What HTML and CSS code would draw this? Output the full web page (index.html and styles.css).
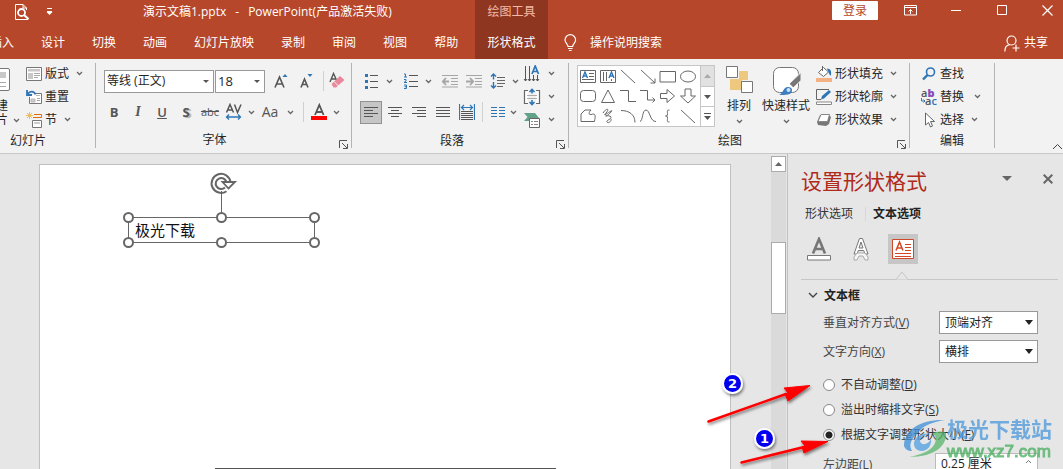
FILE: index.html
```html
<!DOCTYPE html>
<html lang="zh-CN">
<head>
<meta charset="utf-8">
<title>演示文稿1.pptx - PowerPoint</title>
<link rel="stylesheet" href="styles.css">
</head>
<body>
<svg class="defs" width="0" height="0" aria-hidden="true">
  <symbol id="chev" viewBox="0 0 7 5"><path d="M1 1l2.500 2.500L6 1" fill="none" stroke="#666" stroke-width="1.300"/></symbol>
  <symbol id="launch" viewBox="0 0 9 9"><path d="M.5 8V.5H8M3 3l5 5M8.500 4v4.500H4" fill="none" stroke="#555"/></symbol>
</svg>

<header class="header">
  <div class="header-main">
    <div class="title-row">
      <button class="hbtn" aria-label="打印预览"><svg width="16" height="18" viewBox="0 0 16 18" fill="none" stroke="#fff"><path d="M14 15.500v1H1.500v-15H9l3.500 3.500v2M9 1.500V5h3.500" /><circle cx="7.500" cy="9.500" r="3.500" stroke-width="1.800"/><path d="M10 12l4.500 4" stroke-width="2.200"/></svg></button>
      <button class="hbtn qat" aria-label="自定义快速访问工具栏"><svg width="7" height="8" viewBox="0 0 7 8"><path d="M1 .5h5M1 3.500h5" stroke="#fff"/><path d="M.5 4h6l-3 3z" fill="#fff"/></svg></button>
      <h1 class="doc-title"><span>演示文稿1.pptx</span><span>-</span><span>PowerPoint(产品激活失败)</span></h1>
    </div>
    <nav class="tabs">
      <button class="tab">插入</button><button class="tab">设计</button><button class="tab">切换</button><button class="tab">动画</button><button class="tab">幻灯片放映</button><button class="tab">录制</button><button class="tab">审阅</button><button class="tab">视图</button><button class="tab">帮助</button>
    </nav>
  </div>
  <div class="context">
    <div class="context-name">绘图工具</div>
    <button class="tab">形状格式</button>
  </div>
  <div class="header-side">
    <div class="window-row">
      <button class="login">登录</button>
      <button class="hbtn" aria-label="功能区显示选项"><svg width="13" height="11" viewBox="0 0 13 11" fill="none" stroke="#fff"><path d="M.5.5h12v9.500H.5zM.5 2.500h12M6.500 9V4.500M4.500 6.500l2-2 2 2"/></svg></button>
      <button class="hbtn" aria-label="最小化"><svg width="11" height="11" viewBox="0 0 11 11"><path d="M0 5.500h10" stroke="#fff"/></svg></button>
      <button class="hbtn" aria-label="最大化"><svg width="11" height="11" viewBox="0 0 11 11"><path d="M.5.5h9v9h-9z" fill="none" stroke="#fff"/></svg></button>
      <button class="hbtn" aria-label="关闭"><svg width="11" height="11" viewBox="0 0 11 11"><path d="M.5.5l10 10M10.500.5l-10 10" stroke="#fff" stroke-width="1.200"/></svg></button>
    </div>
    <div class="search-row">
      <button class="tab tell"><svg width="13" height="18" viewBox="0 0 13 18" fill="none" stroke="#fff" stroke-width="1.200"><path d="M4 12.500c0-2.500-3-3.500-3-6.500a5.300 5.300 0 0 1 10.600 0c0 3-3 4-3 6.500zM4 14.500h4.600M5 16.500h2.600"/></svg>操作说明搜索</button>
      <button class="tab share"><svg width="16" height="17" viewBox="0 0 16 17" fill="none" stroke="#fff" stroke-width="1.200"><circle cx="7.500" cy="5.500" r="4.500"/><path d="M.8 16.500c0-4 2-6.500 5-6.800M12 9.500v7M8.500 13H15.500"/></svg>共享</button>
    </div>
  </div>
</header>

<section class="ribbon" aria-label="功能区">
  <div class="group g-slides">
    <div class="group-body">
      <button class="big new-slide"><svg width="15" height="24" viewBox="0 0 15 24"><rect x="-6" y=".5" width="19.500" height="22" rx="1.500" fill="#fff" stroke="#777"/><path d="M0 4h10v6H0z" fill="#c8c8c8"/><path d="M0 14.500h10M0 18.500h10" stroke="#aaa"/></svg><span>建</span><span>片<svg class="chev"><use href="#chev"/></svg></span></button>
      <div class="stack">
        <button class="cmd"><svg width="16" height="16" viewBox="0 0 16 16" fill="none"><path d="M.5 1.500h15v13H.5z" fill="#fff" stroke="#777"/><path d="M2 3h12v2.500H2zM2 7h5v6H2z" fill="#c8c8c8"/><path d="M8 7.500h6M8 9.500h6M8 11.500h4" stroke="#aaa"/></svg>版式<svg class="chev"><use href="#chev"/></svg></button>
        <button class="cmd"><svg width="16" height="16" viewBox="0 0 16 16" fill="none"><path d="M3.500 8v6.500h12v-10H9" fill="#fff" stroke="#777"/><path d="M10 6.500h4M5 10h4v3H5z" fill="#ccc" stroke="#bbb"/><path d="M11 9.500h3M11 11.500h3" stroke="#aaa"/><path d="M1 1v5h5M1.500 5.500C4 1.500 8 2 9.500 5.500" stroke="#2e75b6" stroke-width="1.800"/></svg>重置</button>
        <button class="cmd"><svg width="16" height="16" viewBox="0 0 16 16" fill="none"><path d="M3.500 0v7M0 3.500h7M1 1l5 5M6 1L1 6" stroke="#eebc5c"/><path d="M8 2.500h7.500v3H7" stroke="#e36c0a"/><path d="M6.500 8.500h9v7h-9z" fill="#fff" stroke="#777"/><path d="M8 10h6v2H8z" fill="#ccc"/></svg>节<svg class="chev"><use href="#chev"/></svg></button>
      </div>
    </div>
    <div class="group-name">幻灯片</div>
  </div>

  <div class="group g-font">
    <div class="group-body lines">
      <div class="line">
        <label class="combo face"><input aria-label="字体" value="等线 (正文)"></label>
        <label class="combo size"><input aria-label="字号" value="18"></label>
        <button class="ib wide" aria-label="增大字号"><svg width="16" height="18" viewBox="0 0 16 18"><path d="M2 15.500L6.500 5l4.500 10.500M3.500 12h6" fill="none" stroke="#555" stroke-width="1.600"/><path d="M9.500 5L12 2l2.500 3z" fill="#2e75b6"/></svg></button>
        <button class="ib" aria-label="减小字号"><svg width="16" height="18" viewBox="0 0 16 18"><path d="M3 15.500L6.500 7l3.500 8.500M4.500 12.500h4" fill="none" stroke="#555" stroke-width="1.600"/><path d="M9.500 2h5L12 5z" fill="#2e75b6"/></svg></button>
        <i class="sep"></i>
        <button class="ib eraser" aria-label="清除格式"><svg width="16" height="18" viewBox="0 0 16 18"><path d="M1 10l3.500-8.500L7.500 8M2.500 7h4" fill="none" stroke="#555" stroke-width="1.400"/><path d="M2.500 12L11 4l4.500 4L7 15.500H4.500z" fill="#e8889a"/><path d="M5 9.500l4.500 4.500" stroke="#f2f2f2"/></svg></button>
      </div>
      <div class="line fonts">
        <button class="ib"><b>B</b></button>
        <button class="ib"><em>I</em></button>
        <button class="ib"><u>U</u></button>
        <button class="ib shadow">S</button>
        <button class="ib strike">abc</button>
        <button class="ib" aria-label="字符间距"><svg width="18" height="18" viewBox="0 0 18 18" fill="none"><path d="M1.500 9.500L5 1.500l3.500 8M3 7h4M9.500 1.500l3 8 3.500-8" stroke="#555" stroke-width="1.500"/><path d="M1.500 14h14M4 11.500L1.500 14 4 16.500M13 11.500l2.500 2.500-2.500 2.500" stroke="#2e75b6" stroke-width="1.300"/></svg></button><svg class="chev"><use href="#chev"/></svg>
        <button class="ib case">Aa</button><svg class="chev"><use href="#chev"/></svg>
        <i class="sep"></i>
        <button class="ib" aria-label="字体颜色"><svg width="16" height="18" viewBox="0 0 16 18"><path d="M4 12l4.300-10L12.600 12M5.500 9h5.500" fill="none" stroke="#555" stroke-width="1.800"/><path d="M0 13h16v4H0z" fill="#f00"/></svg></button><svg class="chev"><use href="#chev"/></svg>
      </div>
    </div>
    <div class="group-name">字体</div><button class="launch" aria-label="字体设置"><svg width="9" height="9"><use href="#launch"/></svg></button>
  </div>

  <div class="group g-para">
    <div class="group-body">
      <div class="lines">
        <div class="line">
          <button class="ib" aria-label="项目符号"><svg width="16" height="16" viewBox="0 0 16 16"><path d="M6 2.500h8M6 8.500h8M6 14.500h8" stroke="#555"/><path d="M1 1h3v3H1zM1 7h3v3H1zM1 13h3v3H1z" fill="#2e75b6"/></svg></button><svg class="chev gap"><use href="#chev"/></svg>
          <button class="ib" aria-label="编号"><svg width="16" height="16" viewBox="0 0 16 16" fill="none"><path d="M6 2.500h9M6 8.500h9M6 13.500h9" stroke="#555"/><path d="M1 1h1.500v3M1 4h3M1 6.500h2v1.500L1 9.500h3M1 12h2.500v3.500H1M1.500 13.700h2" stroke="#2e75b6"/></svg></button><svg class="chev gap"><use href="#chev"/></svg>
          <button class="ib" aria-label="减少缩进"><svg width="16" height="14" viewBox="0 0 16 14" fill="none" stroke="#a6a6a6"><path d="M0 1.500h16M9 4.500h7M9 7.500h7M9 10.500h7M0 13h16"/><path d="M7 7.500H1M4 4L.8 7.500 4 11" stroke-width="1.800"/></svg></button>
          <button class="ib" aria-label="增加缩进"><svg width="16" height="14" viewBox="0 0 16 14" fill="none" stroke="#a6a6a6"><path d="M0 1.500h16M9 4.500h7M9 7.500h7M9 10.500h7M0 13h16"/><path d="M0 7.500h6M4 4l3.200 3.500L4 11" stroke-width="1.800"/></svg></button>
          <button class="ib" aria-label="行距"><svg width="16" height="16" viewBox="0 0 16 16" fill="none"><path d="M7 4.500h8M7 7.500h8M7 10.500h8M7 13.500h6" stroke="#666"/><path d="M3.500 1v5.500M1 3.500L3.500 1 6 3.500M3.500 9v6M1 12.500L3.500 15 6 12.500" stroke="#2e75b6" stroke-width="1.400"/></svg></button><svg class="chev after"><use href="#chev"/></svg>
        </div>
        <div class="line">
          <button class="ib on" aria-label="左对齐"><svg width="14" height="12" viewBox="0 0 14 12"><path d="M0 1.500h14M0 4.500h9M0 7.500h14M0 10.500h9" stroke="#555"/></svg></button>
          <button class="ib" aria-label="居中"><svg width="14" height="12" viewBox="0 0 14 12"><path d="M0 1.500h14M3 4.500h8M0 7.500h14M3 10.500h8" stroke="#555"/></svg></button>
          <button class="ib" aria-label="右对齐"><svg width="14" height="12" viewBox="0 0 14 12"><path d="M0 1.500h14M5 4.500h9M0 7.500h14M5 10.500h9" stroke="#555"/></svg></button>
          <button class="ib" aria-label="两端对齐"><svg width="14" height="12" viewBox="0 0 14 12"><path d="M0 1.500h14M0 4.500h14M0 7.500h14M0 10.500h14" stroke="#555"/></svg></button>
          <button class="ib" aria-label="分散对齐"><svg width="16" height="16" viewBox="0 0 16 16" fill="none"><path d="M2 7.500h12M2 9.500h12M2 11.500h12M2 13.500h12M2 15.500h12" stroke="#555"/><path d="M.5 0v16M15.500 0v16M2.500 3.500h11M5 1L2.500 3.500 5 6M11 1l2.500 2.500L11 6" stroke="#2e75b6" stroke-width="1.200"/></svg></button>
          <i class="sep"></i>
          <button class="ib" aria-label="分栏"><svg width="14" height="12" viewBox="0 0 14 12"><path d="M0 1.500h6M0 4.500h6M0 7.500h6M0 10.500h6M8 1.500h6M8 4.500h6M8 7.500h6M8 10.500h6" stroke="#2e75b6" stroke-width="1.200"/></svg></button><svg class="chev"><use href="#chev"/></svg>
        </div>
      </div>
      <div class="stack">
        <button class="cmd" aria-label="文字方向"><svg width="18" height="18" viewBox="0 0 18 18" fill="none"><path d="M2.500 1v15M6.500 1v15M10.500 10v6M14.500 10v6" stroke="#555"/><path d="M1 14l1.500 2L4 14M5 14l1.500 2L8 14M9 14l1.500 2 1.500-2M13 14l1.500 2 1.500-2" stroke="#555"/><path d="M9 9l3.200-8L15.500 9M10 6.500h4.500" stroke="#2e75b6" stroke-width="1.700"/></svg><svg class="chev"><use href="#chev"/></svg></button>
        <button class="cmd" aria-label="对齐文本"><svg width="18" height="18" viewBox="0 0 18 18" fill="none"><path d="M5 2.500H1.500v13H5M13 2.500h3.500v13H13" fill="#fff" stroke="#666" stroke-width="1.200"/><path d="M4 7.500h10M4 10.500h10" stroke="#aaa"/><path d="M9 1.500v4M6.500 4L9 1.500 11.500 4M9 12v4.500M6.500 14L9 16.500l2.500-2.500" stroke="#2e75b6" stroke-width="1.600"/></svg><svg class="chev"><use href="#chev"/></svg></button>
        <button class="cmd" aria-label="转换为 SmartArt"><svg width="18" height="18" viewBox="0 0 18 18"><path d="M1 2h11l4 5-3 3H1l3.500-4z" fill="#62a288"/><path d="M6.500 7.500h10v9h-10z" fill="#fff" stroke="#666"/><path d="M8 10.500h2M11 10.500h4M8 13.500h2M11 13.500h4" stroke="#888"/></svg><svg class="chev"><use href="#chev"/></svg></button>
      </div>
    </div>
    <div class="group-name">段落</div><button class="launch" aria-label="段落设置"><svg width="9" height="9"><use href="#launch"/></svg></button>
  </div>

  <div class="group g-draw">
    <div class="group-body">
      <div class="gallery">
        <div class="shapes">
          <svg viewBox="0 0 20 20"><path d="M2.500 4.500h15v12h-15zM11 7.500h5M11 10.500h5M4 13.500h12"/><path class="blue" d="M4.500 12L7 6l2.500 6M5.500 10h3"/></svg>
          <svg viewBox="0 0 20 20"><path d="M2.500 4.500h15v12h-15zM5.500 6v9M8.500 6v9M13.500 13v2"/><path class="blue" d="M11 12l2.500-6 2.500 6M12 10h3"/></svg>
          <svg viewBox="0 0 20 20"><path d="M3 4l14 13"/></svg>
          <svg viewBox="0 0 20 20"><path d="M3 4l14 13M17 12.500V17h-4.500"/></svg>
          <svg viewBox="0 0 20 20"><path d="M2 5.500h15.500v10.500H2z"/></svg>
          <svg viewBox="0 0 20 20"><ellipse cx="10" cy="10.500" rx="7.500" ry="5.500"/></svg>
          <svg viewBox="0 0 20 20"><rect x="2.500" y="4.500" width="15" height="11" rx="3"/></svg>
          <svg viewBox="0 0 20 20"><path d="M10 4l6.500 12.500h-13z"/></svg>
          <svg viewBox="0 0 20 20"><path d="M2 4.500h8.500v11H18"/></svg>
          <svg viewBox="0 0 20 20"><path d="M2 4.500h7.500v9.500H17M14.500 11.500L17 14l-2.500 2.500"/></svg>
          <svg viewBox="0 0 20 20"><path d="M2.500 7.500H9V3.500l7.500 6.500-7.500 6.500v-4H2.500z"/></svg>
          <svg viewBox="0 0 20 20"><path d="M7 3h6v7h4.500L10 17l-7.500-7H7z"/></svg>
          <svg viewBox="0 0 20 20"><path d="M3 15.500V8l4-4h6c-3 3-2 5 0 4.500 5-1.500 4.500 1 3.500 7z"/></svg>
          <svg viewBox="0 0 20 20"><path d="M5 7c4-6 7-4 3 0s2 0 5-2-3 5-5 5 4-1 5 1-5 3-4 5 5-1 4-3"/></svg>
          <svg viewBox="0 0 20 20"><path d="M3 4.500c8 0 14 4 14 12"/></svg>
          <svg viewBox="0 0 20 20"><path d="M2 15.500C5 15 4 4 8 4s4 12 10 11.500"/></svg>
          <svg viewBox="0 0 20 20"><path d="M11.500 4c-3 0-2 1-2 3.500S9 10 7.500 10c1.500 0 2 0 2 2.500s-1 3.500 2 3.500"/></svg>
          <svg viewBox="0 0 20 20"><path d="M3 4l14 13"/></svg>
        </div>
        <div class="gallery-nav">
          <button class="off" aria-label="向上"><svg width="7" height="4"><path d="M0 4l3.500-4L7 4z" fill="#aaa"/></svg></button>
          <button aria-label="向下"><svg width="7" height="4"><path d="M0 0h7L3.500 4z" fill="#555"/></svg></button>
          <button aria-label="更多形状"><svg width="7" height="7"><path d="M0 .5h7" stroke="#555"/><path d="M0 3h7L3.500 7z" fill="#555"/></svg></button>
        </div>
      </div>
      <button class="big arrange"><svg width="28" height="32" viewBox="0 0 28 32"><path d="M14 8h9v9h-9z" fill="#edc87e"/><path d="M5 16h12v11H5z" fill="#edc87e"/><path d="M1.500 3.500h11v11h-11zM16.500 18.500h11v11h-11z" fill="#fff" stroke="#777"/></svg><span>排列</span><svg class="chev"><use href="#chev"/></svg></button>
      <button class="big"><svg width="30" height="32" viewBox="0 0 30 32"><rect x="2.500" y="4.500" width="25" height="25" rx="6" fill="#fff" stroke="#777"/><path d="M30 9.500v8L22 25l-4-4z" fill="#777" stroke="#f2f2f2"/><path d="M17.500 21l4 4" stroke="#fff" stroke-width="2"/><path d="M8 32c4-1 4-8 9-8 4 0 5 3 3 6-2 2-8 2-12 2z" fill="#3c7cc0"/><circle cx="17.500" cy="27" r="2" fill="#cfe2f5"/></svg><span>快速样式</span><svg class="chev"><use href="#chev"/></svg></button>
      <div class="stack">
        <button class="cmd"><svg width="16" height="16" viewBox="0 0 16 16" fill="none"><path d="M6.500 0v5M2.500 6.500l5-5 5 4.500-5 4.500z" fill="#fff" stroke="#666"/><path d="M11 2.500c4 0 4.500 3 4 7-1.500 0-2-2-2.500-3.500z" fill="#2e75b6"/><path d="M0 12h16v4H0z" fill="#f4b183"/></svg>形状填充<svg class="chev"><use href="#chev"/></svg></button>
        <button class="cmd"><svg width="16" height="16" viewBox="0 0 16 16" fill="none"><path d="M13 .5H.5v10H5" stroke="#666"/><path d="M5 10.500l1-3.500 7-6 2 2-7 6.500z" fill="#2e75b6"/><path d="M.5 13h15v2.500H.5z" fill="#fff" stroke="#888"/></svg>形状轮廓<svg class="chev"><use href="#chev"/></svg></button>
        <button class="cmd"><svg width="16" height="16" viewBox="0 0 16 16"><path d="M4 3h9l2 2-2 7-3 2-8-1-1-3z" fill="#777"/><path d="M5 2.500h8.500l-2 7H2z" fill="#fff" stroke="#888"/></svg>形状效果<svg class="chev"><use href="#chev"/></svg></button>
      </div>
    </div>
    <div class="group-name">绘图</div><button class="launch" aria-label="设置形状格式"><svg width="9" height="9"><use href="#launch"/></svg></button>
  </div>

  <div class="group g-edit">
    <div class="group-body">
      <div class="stack">
        <button class="cmd"><svg width="16" height="16" viewBox="0 0 16 16" fill="none" stroke="#2e75b6"><circle cx="9.500" cy="6" r="4" stroke-width="1.600"/><path d="M6.500 9L2 13.500" stroke-width="2.400"/></svg>查找</button>
        <button class="cmd"><span class="ab" aria-hidden="true"><span>a<b>b</b></span><span class="ac"><svg width="4" height="5" viewBox="0 0 4 5"><path d="M.5 0v3H4M2.500 1.500L4 3 2.500 4.500" fill="none" stroke="#2e75b6"/></svg>a<i>c</i></span></span>替换<svg class="chev far"><use href="#chev"/></svg></button>
        <button class="cmd"><svg width="16" height="16" viewBox="0 0 16 16"><path d="M4.500 1v12l3-2.500 2 4.500 2-1-2-4.500h4z" fill="#fff" stroke="#666"/></svg>选择<svg class="chev"><use href="#chev"/></svg></button>
      </div>
    </div>
    <div class="group-name">编辑</div>
  </div>
  <button class="collapse" aria-label="折叠功能区"><svg width="11" height="7" viewBox="0 0 11 7"><path d="M1 6l4.500-4.500L10 6" fill="none" stroke="#444"/></svg></button>
</section>

<main class="workspace">
  <div class="canvas">
    <div class="slide">
      <svg class="selection" width="200" height="80" viewBox="0 0 200 80" fill="none" stroke="#666">
        <path d="M98.500 22v26M5.500 48.500h186v25H5.500z"/>
        <g fill="#fff" stroke-width="2"><circle cx="5.500" cy="48.500" r="4.500"/><circle cx="98.500" cy="48.500" r="4.500"/><circle cx="191.500" cy="48.500" r="4.500"/><circle cx="5.500" cy="73.500" r="4.500"/><circle cx="98.500" cy="73.500" r="4.500"/><circle cx="191.500" cy="73.500" r="4.500"/></g>
        <path d="M103.500 22.200A9.500 9.500 0 1 1 107.500 13M102 18.500A5.500 5.500 0 1 1 103.500 13" stroke-width="2"/><path d="M99.500 13h12.500l-6.500 6.500z" fill="#fff" stroke-width="1.800"/>
      </svg>
      <p class="shape-text">极光下载</p>
      <hr class="shape-edge">
    </div>
    <div class="scrollbar">
      <button aria-label="向上滚动"><svg width="7" height="4"><path d="M0 4l3.500-4L7 4z" fill="#666"/></svg></button>
      <div class="thumb"></div>
    </div>
  </div>

  <aside class="pane">
    <div class="pane-head">
      <h2>设置形状格式</h2>
      <button aria-label="任务窗格选项"><svg width="10" height="6"><path d="M0 0h10L5 5z" fill="#666"/></svg></button>
      <button aria-label="关闭窗格"><svg width="10" height="10" viewBox="0 0 10 10"><path d="M.7.7l8.600 8.600M9.300.7L.7 9.300" stroke="#666" stroke-width="2"/></svg></button>
    </div>
    <div class="pane-tabs"><button>形状选项</button><i></i><button class="current">文本选项</button></div>
    <div class="pane-icons">
      <button aria-label="文本填充与轮廓"><svg width="24" height="24" viewBox="0 0 24 24" fill="none"><path d="M6 16.500L12 2l6 14.500M8 12h8" stroke="#777" stroke-width="2.600"/><path d="M.5 18.500h23v4.500H.5z" fill="#fff" stroke="#777"/></svg></button>
      <button aria-label="文字效果"><svg width="24" height="24" viewBox="0 0 24 24"><path d="M10.500 1.500h3L19 17h-3l-1.300-3.500H9.300L8 17H5zM12 5l-2 6h4z" fill="#fff" stroke="#777"/><path d="M8 16h8l3 4v3h-3l-2-4h-4l-2 4H5v-3z" fill="#f5f5f5" stroke="#aaa"/></svg></button>
      <button class="current" aria-label="文本框"><svg width="22" height="20" viewBox="0 0 22 20" fill="none"><path d="M.5.5h21v19H.5z" fill="#fff" stroke="#d24726"/><path d="M4 11.500L7.500 3l3.500 8.500M5.500 9h4" stroke="#d24726" stroke-width="1.500"/><path d="M13 5.500h6M13 8.500h6M13 11.500h6M3 14.500h16M3 17.500h16" stroke="#d24726"/></svg></button>
    </div>
    <svg class="notch" width="14" height="9" viewBox="0 0 14 9"><path d="M0 8.500h1L7 1l6 7.500h1" fill="#e6e6e6" stroke="#c6c6c6"/></svg>
    <h3><svg width="10" height="7" viewBox="0 0 10 7"><path d="M1 1l4 4 4-4" fill="none" stroke="#444" stroke-width="1.400"/></svg>文本框</h3>
    <div class="field"><label for="valign">垂直对齐方式(<u>V</u>)</label><span class="select"><select id="valign"><option>顶端对齐</option></select></span></div>
    <div class="field"><label for="dir">文字方向(<u>X</u>)</label><span class="select"><select id="dir"><option>横排</option></select></span></div>
    <div class="radios">
      <label><input type="radio" name="fit"><span>不自动调整(<u>D</u>)</span></label>
      <label><input type="radio" name="fit"><span>溢出时缩排文字(<u>S</u>)</span></label>
      <label><input type="radio" name="fit" checked><span>根据文字调整形状大小(<u>F</u>)</span></label>
    </div>
    <div class="field margin"><label for="left">左边距(<u>L</u>)</label><span class="spin"><input id="left" value="0.25 厘米"><svg width="7" height="5" viewBox="0 0 7 5"><path d="M1 4l2.500-2.500L6 4" fill="none" stroke="#777"/></svg></span></div>
  </aside>

  <svg class="marks" width="150" height="110" viewBox="0 0 150 110">
    <defs><filter id="drop" x="-20%" y="-20%" width="150%" height="150%"><feDropShadow dx="1" dy="2" stdDeviation="1.500" flood-color="#000" flood-opacity=".5"/></filter></defs>
    <g filter="url(#drop)">
      <path d="M8.500 51.500L86 24" stroke="#f00" stroke-width="2.500" stroke-linecap="round"/><path d="M110 15.500L84 18l4 5-3 1 3 7z" fill="#f00" stroke="#f00" stroke-width="1"/>
      <path d="M41.500 92.500L104 77" stroke="#f00" stroke-width="2.500" stroke-linecap="round"/><path d="M128 71.500L101 71l4 5-3 1 2 6z" fill="#f00" stroke="#f00" stroke-width="1"/>
      <circle cx="32.500" cy="13.500" r="9.500" fill="#0000f0" stroke="#fff" stroke-width="2"/><circle cx="64.500" cy="68.500" r="9.500" fill="#0000f0" stroke="#fff" stroke-width="2"/>
    </g>
    <text x="32.500" y="18">2</text><text x="64.500" y="73">1</text>
  </svg>
  <div class="watermark">
    <svg width="48" height="44" viewBox="0 0 48 44" fill="none"><path d="M1 29C1 12 19 2 42 3 29 5 19 9 14 17c-7 6-8 12-5 17-4 0-7-2-8-5z" fill="#3c8fd8"/><path d="M43 16c1 12-10 24-37 24 11-2 23-6 26-14 2-6 0-8-3-10 5-2 10-2 14 0z" fill="#59b56b"/><path d="M11 27c0-7 8-12 17-10-8 0-13 6-10 9 3 3 8 0 10-4 1 7-4 12-9 12s-8-3-8-7z" fill="#4f9fe0"/></svg>
    <div><strong>极光下载站</strong><span>www.xz7.com</span></div>
  </div>
</main>
</body>
</html>
```

FILE: styles.css
```css
* { box-sizing: border-box; }
html, body { height: 100%; }
body {
  margin: 0;
  display: flex;
  flex-direction: column;
  overflow: hidden;
  background: #e6e6e6;
  color: #262626;
  font: 12px/16px "Open Sans", "Noto Sans CJK SC", sans-serif;
}
button, input, select { font: inherit; color: inherit; margin: 0; padding: 0; border: 0; background: none; }
button { display: flex; align-items: center; justify-content: center; white-space: nowrap; }
svg { display: block; flex: none; }
h1, h2, h3, p { margin: 0; font-weight: normal; }
.defs { position: absolute; }
.chev { width: 7px; height: 5px; }

/* Header */
.header { display: flex; flex: none; height: 59px; background: #b7472a; color: #fff; }
.header-main { width: 475px; flex: none; overflow: hidden; }
.title-row { display: flex; align-items: center; height: 24px; padding-left: 14px; }
.qat { margin-left: 16px; }
.doc-title { display: flex; gap: 9px; margin-left: 90px; font-size: 12px; white-space: nowrap; }
.tabs { display: flex; gap: 27px; height: 35px; margin-left: -10px; }
.tab { height: 35px; padding-top: 3px; }
.context { display: flex; flex-direction: column; align-items: center; width: 73px; background: #8f3621; }
.context-name { height: 24px; line-height: 24px; color: #f4b9a4; }
.header-side { flex: 1; }
.window-row { display: flex; align-items: center; justify-content: flex-end; height: 24px; padding-bottom: 3px; }
.window-row .hbtn { width: 46px; height: 20px; }
.window-row .hbtn:last-child { width: 38px; padding-left: 6px; }
.login { width: 46px; height: 19px; margin-right: 9px; background: #fff; color: #b7472a; border-radius: 1px; }
.search-row { display: flex; justify-content: space-between; padding: 0 15px 0 16px; }
.tell { gap: 13px; }
.share { gap: 4px; }

/* Ribbon */
.ribbon { display: flex; flex: none; height: 95px; padding: 4px 0 5px; background: #f2f2f2; border-bottom: 1px solid #c8c8c8; }
.group { position: relative; display: flex; flex-direction: column; flex: none; border-right: 1px solid #b4b4b4; }
.group-body { display: flex; height: 70px; }
.group-name { text-align: center; line-height: 16px; padding-top: 2px; }
.launch { position: absolute; right: 3px; bottom: -1px; }
.stack { display: flex; flex-direction: column; margin-top: -1px; }
.cmd { height: 23px; gap: 3px; justify-content: flex-start; }
.cmd .chev { margin-left: 4px; }
.cmd .far { margin-left: 7px; }
.lines { display: flex; flex-direction: column; gap: 7px; padding-top: 6px; }
.line { display: flex; align-items: center; height: 24px; }
.ib { width: 24px; height: 23px; color: #555; }
.sep { width: 1px; height: 20px; margin: 0 5px; background: #d0d0d0; }
.big { flex-direction: column; justify-content: flex-start; }

.g-slides { width: 96px; }
.g-slides .group-name { padding-right: 39px; }
.new-slide { width: 24px; margin: 5px 6px 0 -4px; align-items: flex-start; line-height: 14px; }
.new-slide > svg { height: 24px; }
.new-slide span { display: flex; align-items: center; gap: 5px; }

.g-font { width: 256px; }
.g-font .group-body { padding-left: 8px; }
.g-font .group-name { padding-right: 18px; }
.combo { display: flex; align-items: center; height: 23px; background: #fff; border: 1px solid #999; }
.combo::after, .select::after { content: ""; border: 3px solid transparent; border-top-color: #555; border-bottom: 0; }
.combo input { flex: 1; min-width: 0; padding-left: 2px; font-size: 12px; line-height: 20px; }
.combo::after { margin-right: 4px; }
.face { width: 110px; margin-right: 1px; }
.size { width: 50px; margin-right: 2px; }
.size input { font-size: 13px; }
.wide { width: 27px; }
.eraser { margin-left: -4px; }
.fonts { margin-left: -2px; font-size: 13px; }
.fonts .sep { margin: 0 3px 0 9px; }
.fonts .chev { margin-left: 2px; }
.case { width: 30px; font-size: 14px; }
.shadow { font-weight: bold; text-shadow: 2px 1px 1px #aaa; }
.strike { font-size: 11px; text-decoration: line-through; }
.fonts em { font-family: "Liberation Serif", serif; font-weight: bold; font-size: 14px; }
.fonts u { font-weight: 600; }

.g-para { width: 217px; padding-left: 8px; }
.g-para .group-body { justify-content: space-between; padding-right: 13px; }
.g-para .group-name { padding-right: 24px; }
.g-para .gap { margin: 0 6px 0 2px; }
.g-para .after { margin-left: 2px; }
.on { width: 22px; margin-right: 1px; background: #c6c6c6; border: 1px solid #919191; }
.g-para .sep { margin: 0 3px; }
.g-para .line .chev:last-child { margin-right: -2px; }

.g-draw { width: 341px; padding-left: 8px; }
.g-draw .group-name { padding-right: 26px; }
.gallery { display: flex; align-self: flex-start; width: 138px; height: 62px; margin: 2px 10px 0 0; background: #fff; border: 1px solid #c6c6c6; }
.shapes { display: grid; grid-template-columns: repeat(6, 20px); width: 122px; }
.shapes svg { width: 20px; height: 20px; fill: none; stroke: #666; }
.shapes .blue { stroke: #2e75b6; stroke-width: 1.4; }
.gallery-nav { flex: 1; display: grid; grid-template-rows: repeat(3, 1fr); border-left: 1px solid #c6c6c6; }
.gallery-nav button + button { border-top: 1px solid #c6c6c6; }
.gallery-nav .off { background: #e1e1e1; }
.big span + .chev { margin-top: 5px; }
.big > svg:first-child + span { margin-top: 3px; }
.new-slide > svg:first-child + span { margin-top: 7px; }
.arrange { margin-right: 9px; }
.g-draw .stack { margin-left: 6px; }

.g-edit { width: 85px; padding-left: 11px; }
.g-edit .group-name { padding-right: 11px; }
.ab { display: grid; width: 16px; font: 600 11px/8px "Open Sans", sans-serif; text-align: left; color: #555; }
.ab b { color: #8a4bb8; }
.ab i { color: #2e75b6; font-style: normal; }
.ac { display: flex; align-items: center; }
.collapse { margin: auto 0 -2px auto; }

/* Workspace */
.workspace { position: relative; display: flex; flex: 1; min-height: 0; overflow: hidden; }
.canvas { display: flex; flex: 1; min-width: 0; padding-left: 39px; }
.slide { position: relative; flex: 1; margin: 10px 40px 0 0; background: #fff; border: 1px solid #c0c0c0; border-bottom: 0; }
.selection { position: absolute; left: 83px; top: 4px; }
.shape-text { position: absolute; left: 95px; top: 55px; font-size: 15px; line-height: 20px; color: #111; }
.shape-edge { position: absolute; left: 175px; top: 303px; width: 341px; margin: 0; border: 0; border-top: 1px solid #555; }
.scrollbar { display: flex; flex-direction: column; gap: 70px; width: 15px; margin-top: 2px; background: #dadada; }
.scrollbar button { height: 16px; background: #fff; border: 1px solid #ababab; }
.thumb { height: 72px; background: #fff; border: 1px solid #ababab; }

/* Task pane */
.pane { width: 276px; flex: none; padding: 10px 5px 0 13px; border-left: 1px solid #c0c0c0; margin-left: 1px; color: #444; }
.pane-head { display: flex; align-items: center; height: 36px; padding: 0 5px 6px 0; }
.pane-head h2 { flex: 1; padding-top: 3px; font-size: 21px; line-height: 28px; color: #b02a1a; }
.pane-head button + button { margin-left: 31px; }
.pane-tabs { display: flex; gap: 7px; height: 28px; align-items: center; padding-left: 4px; color: #333; }
.pane-tabs i { width: 1px; height: 14px; margin-left: 5px; background: #d8d8d8; }
.pane-tabs .current { font-weight: bold; color: #222; }
.pane-icons { display: flex; gap: 12px; margin: 6px 0 0 3px; }
.pane-icons button { width: 30px; height: 30px; }
.pane-icons .current { background: #c6c6c6; }
.notch { margin: 7px 0 0 94px; position: relative; z-index: 1; }
.pane h3 { display: flex; align-items: center; gap: 6px; height: 29px; margin-top: -1px; padding: 3px 0 0 7px; border-top: 1px solid #c6c6c6; font-size: 12px; font-weight: bold; color: #222; }
.field { display: flex; align-items: center; justify-content: space-between; height: 29px; padding: 0 20px 0 22px; }
.select { display: flex; align-items: center; width: 99px; height: 23px; padding-right: 4px; background: #fff; border: 1px solid #999; color: #222; }
.select::after { border-width: 5px 4px 0; border-top-color: #222; }
.select select { flex: 1; appearance: none; padding-left: 5px; height: 20px; }
.radios { display: grid; gap: 9px; margin-top: 11px; padding-left: 22px; color: #333; }
.radios label { display: flex; align-items: center; gap: 6px; height: 16px; }
.radios input { appearance: none; width: 12px; height: 12px; background: #fff; border: 1px solid #888; border-radius: 50%; }
.radios input:checked { background: radial-gradient(circle, #222 3px, #fff 4px); }
.margin { margin-top: 7px; }
.spin { display: flex; align-items: flex-start; width: 103px; height: 23px; padding: 2px 5px 0; background: #fff; border: 1px solid #bbb; color: #222; }
.spin input { flex: 1; min-width: 0; }
.spin svg { margin-top: 3px; }

/* Overlays */
.marks { position: absolute; right: 213px; top: 216px; }
.marks text { fill: #fff; font: bold 13px "DejaVu Sans", sans-serif; text-anchor: middle; }
.watermark { position: absolute; right: 11px; top: 263px; display: flex; opacity: .75; font-family: "Liberation Sans", "Noto Sans CJK SC", sans-serif; }
.watermark div { display: grid; align-content: start; margin-left: -4px; }
.watermark strong { font-size: 21px; line-height: 25px; color: #4a98dc; }
.watermark span { font-size: 17px; line-height: 19px; color: #45ad5c; -webkit-text-stroke: 1px #45ad5c; }
```
